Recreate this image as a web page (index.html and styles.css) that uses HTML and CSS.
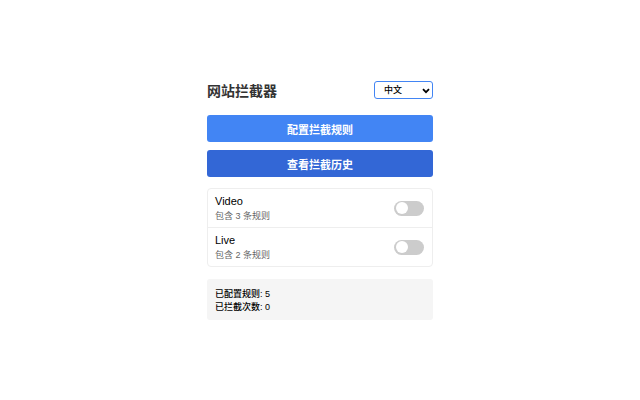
FILE: index.html
```html
<!DOCTYPE html>
<html lang="zh-CN">
<head>
    <meta charset="UTF-8">
    <title>网站拦截器</title>
    <link rel="stylesheet" href="styles.css">
</head>
<body>
<div class="popup">
    <div class="header">
        <h1>网站拦截器</h1>
        <div class="lang">
            <select class="lang-select" aria-label="语言">
                <option selected>中文</option>
                <option>English</option>
            </select>
            <svg class="arrow" viewBox="0 0 8 6" aria-hidden="true"><path d="M1 1.2 4 4.2 7 1.2"/></svg>
        </div>
    </div>
    <div class="buttons">
        <button type="button" class="btn">配置拦截规则</button>
        <button type="button" class="btn btn-dark">查看拦截历史</button>
    </div>
    <ul class="groups">
        <li>
            <label for="video">
                <span class="name">Video</span>
                <span class="count">包含 3 条规则</span>
            </label>
            <input type="checkbox" class="switch" id="video">
        </li>
        <li>
            <label for="live">
                <span class="name">Live</span>
                <span class="count">包含 2 条规则</span>
            </label>
            <input type="checkbox" class="switch" id="live">
        </li>
    </ul>
    <div class="stats">
        <p>已配置规则: 5</p>
        <p>已拦截次数: 0</p>
    </div>
</div>
</body>
</html>
```
FILE: styles.css
```css
* {
    margin: 0;
    padding: 0;
    box-sizing: border-box;
}

body {
    display: flex;
    align-items: center;
    justify-content: center;
    min-height: 100vh;
    background-color: #fff;
    color: #000;
    font-family: "Liberation Sans", "Noto Sans CJK SC", sans-serif;
    font-size: 9px;
    line-height: 13px;
}

ul {
    list-style: none;
}

button, select {
    font-family: inherit;
}

.popup {
    width: 100%;
    max-width: 226px;
}

.header {
    display: flex;
    align-items: center;
    justify-content: space-between;
    margin-bottom: 16px;
}

.header h1 {
    padding-top: 2px;
    color: #333;
    font-size: 14px;
    line-height: 16px;
}

.lang {
    position: relative;
    display: flex;
}

.lang-select {
    width: 59px;
    height: 18px;
    padding: 0 16px 0 9px;
    border: 1px solid #4285f4;
    border-radius: 3px;
    background-color: #fff;
    color: #000;
    font-size: 9px;
    font-weight: 500;
    appearance: none;
}

/* 下拉箭头 */
.arrow {
    position: absolute;
    top: 7px;
    right: 3px;
    width: 8px;
    height: 6px;
    fill: none;
    stroke: #000;
    stroke-width: 1.8;
    pointer-events: none;
}

.buttons {
    display: flex;
    flex-direction: column;
    gap: 8px;
    margin-bottom: 11px;
}

.btn {
    height: 27px;
    padding-top: 1px;
    border: none;
    border-radius: 3px;
    background-color: #4285f4;
    color: #fff;
    font-size: 11px;
    font-weight: bold;
    cursor: pointer;
}

.btn-dark {
    background-color: #3367d6;
}

.groups {
    margin-bottom: 12px;
    border: 1px solid #eee;
    border-radius: 4px;
}

.groups li {
    display: flex;
    align-items: center;
    justify-content: space-between;
    padding: 5px 8px 4px 7px;
}

.groups li + li {
    border-top: 1px solid #eee;
}

.name, .count {
    display: block;
}

.name {
    font-size: 11px;
    line-height: 15px;
}

.count {
    color: #666;
    line-height: 14px;
}

/* 开关 */
.switch {
    display: flex;
    align-items: center;
    width: 30px;
    height: 15px;
    padding: 0 2px;
    border-radius: 8px;
    background-color: #ccc;
    appearance: none;
    cursor: pointer;
}

.switch::before {
    content: "";
    width: 12px;
    height: 12px;
    border-radius: 50%;
    background-color: #fff;
}

.switch:checked {
    justify-content: flex-end;
    background-color: #4285f4;
}

.stats {
    padding: 9px 8px 6px;
    border-radius: 3px;
    background-color: #f5f5f5;
    font-weight: 500;
}
```
